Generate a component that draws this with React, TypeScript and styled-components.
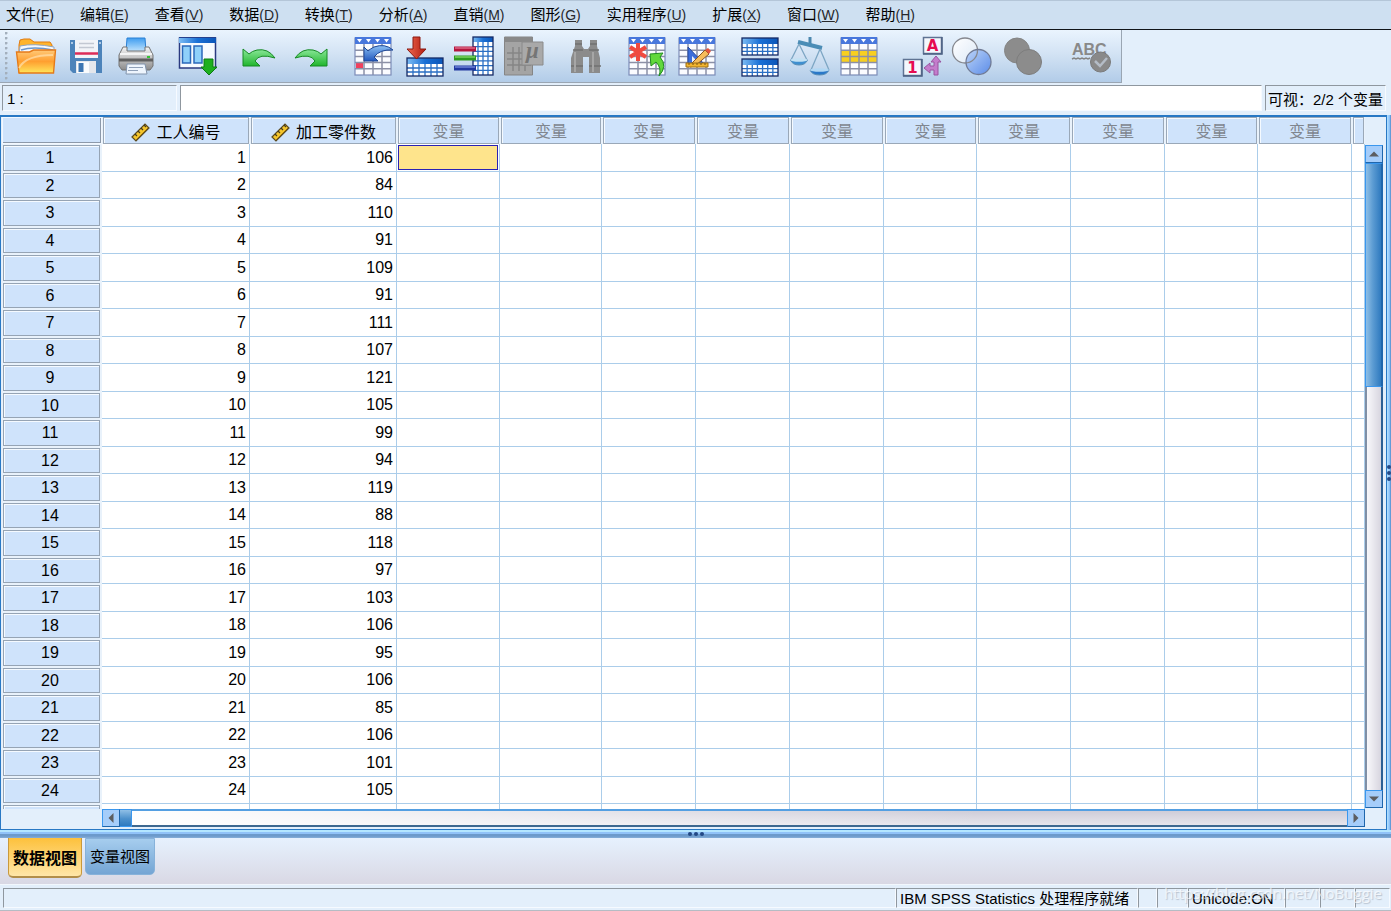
import React from 'react';
import styled, { createGlobalStyle, css } from 'styled-components';

const GlobalStyle = createGlobalStyle`
  * { box-sizing: border-box; }
  body {
    margin: 0;
    background: #e3effb;
    color: #000;
    font: 15px/20px "Liberation Sans", "Noto Sans CJK SC", sans-serif;
  }
  button, input { font: inherit; color: inherit; }
`;

const Shell = styled.div`
  display: flex;
  flex-direction: column;
  height: 100vh;
  overflow: hidden;
`;

/* ---------- menu bar ---------- */

const MenuBar = styled.nav`
  display: flex;
  gap: 26px;
  height: 30px;
  padding: 0 6px;
  background: #cee0f1;
  border-top: 1px solid #b4c6d8;
  border-bottom: 1px solid #101418;
`;

const MenuButton = styled.button`
  padding: 0;
  border: 0;
  background: none;
  white-space: nowrap;
`;

const Mnemonic = styled.span`
  font-size: 14px;
  color: #26282c;
`;

/* ---------- toolbar ---------- */

const Toolbar = styled.div`
  display: flex;
  align-self: flex-start;
  align-items: center;
  height: 53px;
  padding: 0 4px 0 5px;
  background: linear-gradient(#eaf4fe, #d3e3f4 45%, #b2cce8);
  border-right: 1px solid #9aa6b3;
  border-bottom: 1px solid #9aa6b3;
`;

const Grip = styled.div`
  width: 3px;
  height: 48px;
  margin-right: 3px;
  background: radial-gradient(circle at 1px 1px, #a3afbc 1px, transparent 2px) 0 0 / 3px 5px;
`;

const ToolGroup = styled.div<{ $space?: number }>`
  display: flex;
  margin-left: ${(p) => p.$space ?? 0}px;
`;

const ToolButton = styled.button`
  display: flex;
  align-items: center;
  justify-content: center;
  width: 50px;
  height: 50px;
  padding: 0;
  border: 0;
  background: none;
`;

/* ---------- cell entry ---------- */

const EntryRow = styled.div`
  display: flex;
  gap: 3px;
  height: 32px;
  padding: 2px 5px 4px 2px;
`;

const sunken = css`
  border: 1px solid #f6faff;
  border-top: 1px solid #8f979f;
  border-left: 1px solid #8f979f;
`;

const CellName = styled.input`
  ${sunken}
  width: 175px;
  padding: 2px 4px 0;
  background: #e3effb;
  border-radius: 0;
`;

const CellValue = styled.input`
  ${sunken}
  flex: 1;
  min-width: 0;
  padding: 2px 4px 0;
  background: #fff;
  border-radius: 0;
`;

const VisibleInfo = styled.div`
  ${sunken}
  width: 121px;
  padding: 4px 0 0 2px;
  white-space: nowrap;
`;

/* ---------- data grid ---------- */

const Workspace = styled.div`
  display: flex;
  flex: 1;
  min-height: 0;
`;

const Frame = styled.main`
  display: grid;
  grid-template-columns: minmax(0, 1fr) 19px;
  grid-template-rows: minmax(0, 1fr) 19px;
  flex: 1;
  min-width: 0;
  padding: 0 2px 1px 1px;
  border: 1px solid #2878c4;
  border-top-width: 2px;
`;

const GridClip = styled.div`
  overflow: hidden;
`;

const DataTable = styled.table`
  width: 100%;
  table-layout: fixed;
  border-collapse: separate;
  border-spacing: 0;
  font-size: 16px;
  line-height: 20px;
`;

const headFace = css`
  padding: 0;
  background: #cfe3fb;
  font-weight: normal;
  text-align: center;
  white-space: nowrap;
  overflow: hidden;
`;

const Corner = styled.th`
  ${headFace}
  height: 27px;
  box-shadow: inset 0 0 0 1px #f2f8ff, inset -1px -1px 0 1px #8c99aa;
`;

const ColumnHead = styled.th<{ $named?: boolean }>`
  ${headFace}
  height: 27px;
  padding-top: 2px;
  color: ${(p) => (p.$named ? '#000' : '#80868e')};
  box-shadow: inset 0 0 0 1px #9aa8b8, inset 2px 2px 0 0 #f5faff;
  border-right: 1px solid #e9f2fb;
  border-left: 1px solid #e9f2fb;
`;

const HeadLabel = styled.span`
  display: flex;
  align-items: center;
  justify-content: center;
  gap: 6px;
  padding-top: 2px;
`;

const BodyRow = styled.tr`
  height: 28px;
  &:nth-child(even) { height: 27px; }
`;

const RowHead = styled.th`
  ${headFace}
  padding-right: 3px;
  border-right: 1px solid #e9f2fb;
  box-shadow: inset 0 0 0 1px #e9f2fb, inset 0 0 0 2px #96a4b4, inset 3px 3px 0 0 #f5faff;
`;

const Cell = styled.td<{ $selected?: boolean }>`
  padding: 0 3px 0 0;
  background: #fff;
  border-right: 1px solid #abcdea;
  border-bottom: 1px solid #abcdea;
  text-align: right;
  ${(p) =>
    p.$selected &&
    css`
      background: #fee48c;
      box-shadow: inset 0 0 0 1px #fff, inset 0 0 0 2px #2a22b4;
    `}
`;

/* ---------- scroll bars ---------- */

const VScroll = styled.div`
  display: flex;
  flex-direction: column;
  padding-top: 28px;
  padding-bottom: 1px;
`;

const HScroll = styled.div`
  display: flex;
  height: 18px;
  margin-left: 100px;
`;

const ScrollButton = styled.button`
  display: flex;
  flex: none;
  align-items: center;
  justify-content: center;
  width: 18px;
  height: 18px;
  padding: 0;
  border: 1px solid #3a97ee;
  border-right-color: #1f66ac;
  border-bottom-color: #1f66ac;
  background: #a5cdfa;
`;

const VThumb = styled.div`
  flex: 223;
  width: 18px;
  border: 1px solid #3a97ee;
  border-right: 2px solid #1f66ac;
  background: linear-gradient(90deg, #8fbfe6, #5c9cd3 45%, #2f7abf);
`;

const VTrack = styled.div`
  flex: 406;
  width: 18px;
  border-left: 2px solid #7f8fa5;
  border-right: 2px solid #2c5f95;
  background: linear-gradient(90deg, #f8f8fb, #d7d5df);
`;

const HThumb = styled.div`
  width: 12px;
  border: solid #3a97ee;
  border-width: 1px 1px 1px 0;
  background: linear-gradient(#8fbfe6, #4c90cb 55%, #2f7abf);
`;

const HTrack = styled.div`
  flex: 1;
  border-top: 2px solid #549fe2;
  border-bottom: 2px solid #3d6890;
  background: linear-gradient(90deg, #fff, rgba(255, 255, 255, 0) 70%),
    linear-gradient(#cfcdd8, #e6e5ec);
`;

const SideSplitter = styled.div`
  display: flex;
  flex-direction: column;
  justify-content: center;
  width: 4px;
  background: linear-gradient(90deg, #b5e2ff, #8fc4fa 60%, #4f89c9);
`;

const BottomSplitter = styled.div`
  display: flex;
  justify-content: center;
  height: 8px;
  background: linear-gradient(#b4e6ff 0 2px, #90c2f8 2px 4px, #6c9acb 4px 6px, #86aed8);
`;

/* ---------- view tabs ---------- */

const TabStrip = styled.div`
  display: flex;
  align-items: flex-start;
  gap: 3px;
  height: 46px;
  padding-left: 8px;
  background: linear-gradient(#e6f1fe, #d9d8e4);
`;

const Tab = styled.button<{ $active?: boolean }>`
  padding: 0;
  white-space: nowrap;
  border-radius: 0 0 5px 5px;
  ${(p) =>
    p.$active
      ? css`
          width: 74px;
          height: 40px;
          padding-top: 4px;
          font-size: 16px;
          font-weight: bold;
          border: 1px solid #c9993c;
          border-top: 0;
          border-bottom: 2px solid #b28e49;
          background: linear-gradient(#fdc13c, #ffe6a8);
        `
      : css`
          width: 70px;
          height: 37px;
          border: 1px solid #87b2da;
          background: linear-gradient(#a6cdee, #74a5d4);
        `}
`;

/* ---------- status bar ---------- */

const StatusBar = styled.footer`
  position: relative;
  display: flex;
  height: 27px;
  padding: 3px 1px 2px 3px;
  border-top: 1px solid #f2f7fd;
  border-bottom: 1px solid #b5bcc4;
`;

const StatusCell = styled.div<{ $width?: number }>`
  ${sunken}
  flex: ${(p) => (p.$width ? `0 0 ${p.$width}px` : '1')};
  padding-left: 3px;
  white-space: nowrap;
`;

const Watermark = styled.span`
  position: absolute;
  right: 9px;
  top: -3px;
  font: 15px/22px "Open Sans", sans-serif;
  color: rgba(255, 255, 255, 0.7);
  text-shadow: 1px 1px 1px rgba(120, 130, 145, 0.4);
`;

/* ---------- icons ---------- */

const Icon = ({ children, name }: { children: React.ReactNode; name: string }) => (
  <svg width="42" height="42" viewBox="0 0 42 42" role="img" aria-label={name}>
    {children}
  </svg>
);

const lines = (x: number, y: number, w: number, h: number, cols: number, rows: number) => {
  let d = '';
  for (let i = 1; i < cols; i++) d += `M${x + (w * i) / cols} ${y}v${h}`;
  for (let j = 1; j < rows; j++) d += `M${x} ${y + (h * j) / rows}h${w}`;
  return d;
};

const Sheet = ({ x = 2, fill }: { x?: number; fill?: React.ReactNode }) => (
  <g>
    <rect x={x} y="3" width="36" height="37" fill="#fbfcff" />
    {fill}
    <path d={lines(x, 9, 36, 31, 4, 5)} stroke="#8c90a6" strokeWidth="1.5" />
    <rect x={x} y="3" width="36" height="37" fill="none" stroke="#7c8cb8" strokeWidth="1.2" />
    <rect x={x} y="2" width="36" height="7" fill="#4877dc" />
    {[0, 1, 2, 3].map((i) => (
      <path key={i} d={`M${x + 2 + i * 9} 4h5l-2.5 3.5z`} fill="#fff" />
    ))}
  </g>
);

const BlueTable = ({ x, y, w, h, cols, rows, head }: {
  x: number; y: number; w: number; h: number; cols: number; rows: number; head: number;
}) => (
  <g>
    <rect x={x} y={y} width={w} height={h} fill="#fff" />
    <path d={lines(x, y + head, w, h - head, cols, rows)} stroke="#2a6fc4" strokeWidth="1.3" />
    <rect x={x} y={y} width={w} height={head} fill="url(#headBlue)" />
    <rect x={x} y={y} width={w} height={h} fill="none" stroke="#152a66" strokeWidth="1.3" />
  </g>
);

const GradientDefs = styled.svg`
  display: block;
`;

const Gradients = () => (
  <GradientDefs width="0" height="0" aria-hidden="true">
    <defs>
      <linearGradient id="headBlue"><stop stopColor="#7dbdf4" /><stop offset=".5" stopColor="#1a70d6" /><stop offset="1" stopColor="#0b55b8" /></linearGradient>
      <linearGradient id="orange" x2="0" y2="1"><stop stopColor="#ffc978" /><stop offset=".5" stopColor="#ff9f30" /><stop offset="1" stopColor="#ffe65c" /></linearGradient>
      <linearGradient id="green" x2="0" y2="1"><stop stopColor="#8be89a" /><stop offset="1" stopColor="#20b52c" /></linearGradient>
      <linearGradient id="red"><stop stopColor="#f06a50" /><stop offset="1" stopColor="#b01a10" /></linearGradient>
      <linearGradient id="blue" x2="0" y2="1"><stop stopColor="#8cc0f4" /><stop offset="1" stopColor="#2358be" /></linearGradient>
      <linearGradient id="paper" x2="0" y2="1"><stop stopColor="#3f9df0" /><stop offset="1" stopColor="#c6e6fd" /></linearGradient>
      <linearGradient id="metal" x2="0" y2="1"><stop stopColor="#f4f4f4" /><stop offset="1" stopColor="#8c8c8c" /></linearGradient>
      <linearGradient id="lens" x2="1" y2="1"><stop stopColor="#bcd4f8" /><stop offset="1" stopColor="#5b8ce8" /></linearGradient>
      <linearGradient id="glass" x2="1" y2="1"><stop stopColor="#fff" /><stop offset="1" stopColor="#dce8f6" /></linearGradient>
    </defs>
  </GradientDefs>
);

const OpenIcon = () => (
  <Icon name="打开">
    <path d="M4 38V10l1-5 4-1h6l4 3h16l2 3v26z" fill="#ffb42c" stroke="#e07a10" />
    <path d="M5 11q14-3 34 1v8H4z" fill="#f7f9fc" stroke="#8fa6c4" />
    <path d="M6 15q12-4 32 0" fill="none" stroke="#6a97cc" strokeWidth="1.5" />
    <path d="M1.500 17h13l4-2h22l-2 23H4z" fill="url(#orange)" stroke="#e57a18" strokeWidth="1.4" />
    <path d="M4 33q7-13 34-13" fill="none" stroke="#ffdfae" strokeWidth="2" opacity=".7" />
  </Icon>
);
const SaveIcon = () => (
  <Icon name="保存">
    <path d="M5 5h32v33H8l-3-3z" fill="#4c83ba" />
    <path d="M10 5h23v18H10z" fill="#f2f4f8" />
    <path d="M14 8.500h15M14 12.500h15" stroke="#c3c8d2" strokeWidth="1.5" />
    <path d="M10 18.500h23" stroke="#dc2c58" strokeWidth="2.5" />
    <path d="M11 26h20v12H11z" fill="#e4e7ec" />
    <path d="M12 27h12v11H12z" fill="#fafbfc" />
    <path d="M13.500 28h5v9h-5z" fill="#3d76b2" />
    <path d="M7 7v2M35 7v2" stroke="#cfe2f4" strokeWidth="1.5" />
  </Icon>
);
const PrintIcon = () => (
  <Icon name="打印">
    <path d="M12 3h18l1 14H11z" fill="url(#paper)" stroke="#2a80d4" />
    <path d="M8 12h4v4h18v-4h4l4 8v11l-3 4H7l-3-4V20z" fill="url(#metal)" stroke="#737373" />
    <path d="M5 19h32" stroke="#fff" strokeWidth="1.500" />
    <path d="M4 25h34" stroke="#606060" strokeWidth="3" />
    <path d="M32 22h3" stroke="#36c436" strokeWidth="2" />
    <path d="M12 29h18l2 10H11z" fill="#eef5fd" stroke="#8294ac" />
    <path d="M14 32.500h14M13 35.500h10" stroke="#8fa0b8" />
  </Icon>
);
const RecallIcon = () => (
  <Icon name="重新调用对话框">
    <path d="M2.500 3h36v30h-36z" fill="#f6faff" stroke="#2a3a80" strokeWidth="1.5" />
    <path d="M2 2.500h37V8H2z" fill="url(#headBlue)" />
    <path d="M2 2.500h37" stroke="#25408c" />
    <path d="M5.500 11h8v17h-8zM17 11h8v17h-8z" fill="#8fd0fa" stroke="#2b68ba" strokeWidth="1.5" />
    <path d="M27 24h9v8h4l-8 8-8-8h3z" fill="#1eb01e" stroke="#0c7a14" />
  </Icon>
);
const undoPath = 'M4 14v17h17l-5-5q4-8 20-3-7-10-18-8-5 1-8 4z';
const UndoIcon = () => (
  <Icon name="撤销"><path d={undoPath} fill="url(#green)" stroke="#168a24" /></Icon>
);
const RedoIcon = () => (
  <Icon name="重做"><path d={undoPath} fill="url(#green)" stroke="#168a24" transform="matrix(-1 0 0 1 42 0)" /></Icon>
);
const GotoCaseIcon = () => (
  <Icon name="转到个案">
    <Sheet fill={<path d="M3 28h7v5H3z" fill="#f0405c" />} />
    <path d="M11 12v14h14l-4-4q6-8 19-7-8-7-19-3-4 2-6 4z" fill="url(#blue)" stroke="#1e4796" />
  </Icon>
);
const GotoVariableIcon = () => (
  <Icon name="转到变量">
    <BlueTable x={4} y={23} w={36} h={18} cols={6} rows={3} head={6} />
    <path d="M10 2h7v12h6l-9.500 10L4 14h6z" fill="url(#red)" stroke="#8c1810" />
  </Icon>
);
const VariablesIcon = () => (
  <Icon name="变量">
    <BlueTable x={20} y={2} w={20} h={38} cols={4} rows={7} head={5} />
    <path d="M1 14h22" stroke="#b4163e" strokeWidth="5" /><path d="M2 13h20" stroke="#f290a8" />
    <path d="M1 23h22" stroke="#2e9a20" strokeWidth="5" /><path d="M2 22h20" stroke="#a2f080" />
    <path d="M1 33h22" stroke="#2238a0" strokeWidth="5" /><path d="M2 32h20" stroke="#94a8f4" />
  </Icon>
);
const StatsIcon = () => (
  <Icon name="描述统计">
    <path d="M1.500 2h28v38h-28z" fill="#a4a4a4" stroke="#858585" />
    <path d="M1.500 2h28v5h-28z" fill="#898989" />
    <path d={lines(4, 12, 24, 24, 4, 4)} stroke="#858585" strokeWidth="1.5" />
    <path d="M19 7h21v23H19z" fill="#a9a9a9" stroke="#8a8a8a" />
    <text x="23" y="23" fontFamily="Liberation Serif" fontStyle="italic" fontWeight="bold" fontSize="23" fill="#757575">μ</text>
  </Icon>
);
const FindIcon = () => (
  <Icon name="查找">
    <path d="M10 5h7v6l2 3h4l2-3V5h7v6l3 12v15H24V22h-6v16H6V23l4-12z" fill="#8b8b8b" />
    <path d="M10 9h7M25 9h7M8 15h10M24 15h10M6 31h12M24 31h12" stroke="#727272" strokeWidth="1.5" />
    <path d="M10 17v20M28 17v20" stroke="#a6a6a6" strokeWidth="2" />
  </Icon>
);
const InsertCaseIcon = () => (
  <Icon name="插入个案">
    <Sheet />
    <path d="M11 8v18M3 12l16 10M19 12L3 22" stroke="#ef4a40" strokeWidth="4" />
    <path d="M23 19l13-1-3 4q8 9-1 19 3-8-3-14l-5 4z" fill="#62d83c" stroke="#218c20" />
  </Icon>
);
const InsertVariableIcon = () => (
  <Icon name="插入变量">
    <Sheet />
    <path d="M11 12v18h17z" fill="#3c6edb" stroke="#2448a0" /><path d="M15 21v6h6z" fill="#e9f1fc" />
    <path d="M15 28l13-13 4 4-14 12-5 1z" fill="#f6bc5a" stroke="#865423" />
    <path d="M28 15l4 4 2-3-3-3z" fill="#e6533c" />
    <path d="M9 28h22v4H9z" fill="#f2b530" stroke="#9c6c10" /><path d="M12 28v2m4-2v2m4-2v2m4-2v2m4-2v2" stroke="#7c5410" />
  </Icon>
);
const SplitIcon = () => (
  <Icon name="拆分文件">
    <BlueTable x={3} y={3} w={36} h={17} cols={7} rows={3} head={6} />
    <BlueTable x={3} y={24} w={36} h={17} cols={7} rows={3} head={6} />
  </Icon>
);
const WeightIcon = () => (
  <Icon name="个案加权">
    <path d="M21 2v9" stroke="#4c88ae" strokeWidth="3" />
    <path d="M9 7l24 6" stroke="#4b8db6" strokeWidth="4" />
    <path d="M10 9L2 25M10 9l8 16M31 14l-9 21M31 14l9 21" stroke="#7da6c4" strokeWidth="1.3" />
    <path d="M1.500 25h17q-2 5-8.500 5t-8.500-5z" fill="#3f8fd0" stroke="#5a8fb6" /><ellipse cx="10" cy="25" rx="8.500" ry="1.800" fill="#c4e2f4" />
    <path d="M21 35h19q-2 5-9.500 5T21 35z" fill="#2a78c8" stroke="#5a8fb6" /><ellipse cx="30.500" cy="35" rx="9.500" ry="1.800" fill="#b2d8f4" />
  </Icon>
);
const SelectIcon = () => (
  <Icon name="选择个案"><Sheet fill={<path d="M2 15h36v12H2z" fill="#f8cf20" />} /></Icon>
);
const LabelsIcon = () => (
  <Icon name="值标签">
    <path d="M22.500 2.500h18v16h-18zM2.500 24.500h18v16h-18z" fill="#f4f7fd" stroke="#5f7393" strokeWidth="1.5" />
    <path d="M22 19h19V2M2 41h19V24" fill="none" stroke="#4e6284" strokeWidth="1.5" />
    <text x="31.500" y="16" textAnchor="middle" fontFamily="DejaVu Sans" fontWeight="bold" fontSize="15" fill="#e60c50">A</text>
    <text x="11.500" y="38" textAnchor="middle" fontFamily="DejaVu Sans" fontWeight="bold" fontSize="15" fill="#e60c50">1</text>
    <path d="M35 21l5 6h-3v13h-4v-5h-4v3l-6-5 6-5v3h4v-4h-3z" fill="#c47ccc" stroke="#98559f" />
  </Icon>
);
const SetsIcon = () => (
  <Icon name="使用变量集">
    <circle cx="14" cy="15.500" r="12.500" fill="url(#glass)" />
    <circle cx="27.500" cy="27" r="12.500" fill="url(#lens)" />
    <circle cx="14" cy="15.500" r="12.500" fill="none" stroke="#86888f" strokeWidth="1.3" />
    <circle cx="27.500" cy="27" r="12.500" fill="none" stroke="#707a94" strokeWidth="1.3" />
  </Icon>
);
const ShowAllIcon = () => (
  <Icon name="显示所有变量">
    <circle cx="16" cy="15.500" r="12.500" fill="#8c8c8c" stroke="#858585" />
    <circle cx="28" cy="27" r="12.500" fill="#8c8c8c" stroke="#7d7d7d" />
  </Icon>
);
const SpellIcon = () => (
  <Icon name="拼写检查">
    <text x="1" y="20" fontFamily="Liberation Sans" fontWeight="bold" fontSize="16" fill="#898989">ABC</text>
    <path d="M1 24l2-1 2 1 2-1 2 1 2-1 2 1 2-1 2 1 2-1" fill="none" stroke="#848484" strokeWidth="1.500" />
    <circle cx="29.500" cy="27" r="10" fill="#898989" stroke="#7a7a7a" />
    <path d="M24 26l5 5 7-8" fill="none" stroke="#b4bcc6" strokeWidth="2.500" />
  </Icon>
);
const RulerIcon = () => (
  <svg width="19" height="19" viewBox="0 0 19 19" aria-hidden="true">
    <path d="M1 14L14 1l4 4L5 18z" fill="#f4c52c" stroke="#5a4a20" strokeWidth="1.2" />
    <path d="M4 11l2 2M7 8l2 2M10 5l2 2M13 2l2 2" stroke="#453a1e" strokeWidth="1.2" />
    <path d="M5 17L17 5" fill="none" stroke="#8f6a10" />
  </svg>
);
const Arrow = ({ turn }: { turn: number }) => (
  <svg width="12" height="12" viewBox="0 0 12 12" aria-hidden="true">
    <path d="M1 8.500L6 3.500l5 5z" fill="#5c5d60" transform={`rotate(${turn} 6 6)`} />
  </svg>
);
const Dots = ({ vertical }: { vertical?: boolean }) => (
  <svg width={vertical ? 4 : 18} height={vertical ? 18 : 8} aria-hidden="true">
    {[3, 9, 15].map((n) => (
      <circle key={n} cx={vertical ? 2 : n} cy={vertical ? n : 4} r="2" fill="#234886" />
    ))}
  </svg>
);

/* ---------- content ---------- */

const menus = [
  ['文件', 'F'], ['编辑', 'E'], ['查看', 'V'], ['数据', 'D'], ['转换', 'T'], ['分析', 'A'],
  ['直销', 'M'], ['图形', 'G'], ['实用程序', 'U'], ['扩展', 'X'], ['窗口', 'W'], ['帮助', 'H'],
];

const toolGroups: { space?: number; icons: React.FC[] }[] = [
  { icons: [OpenIcon, SaveIcon, PrintIcon] },
  { space: 12, icons: [RecallIcon] },
  { space: 12, icons: [UndoIcon, RedoIcon] },
  { space: 14, icons: [GotoCaseIcon, GotoVariableIcon, VariablesIcon, StatsIcon] },
  { space: 12, icons: [FindIcon] },
  { space: 12, icons: [InsertCaseIcon, InsertVariableIcon] },
  { space: 12, icons: [SplitIcon, WeightIcon, SelectIcon] },
  { space: 12, icons: [LabelsIcon, SetsIcon, ShowAllIcon] },
  { space: 20, icons: [SpellIcon] },
];

const columnWidths = [100, 148, 147, 103, 102, 94, 94, 94, 93, 94, 94, 93, 94];
const emptyColumns = 10;
const output = [
  106, 84, 110, 91, 109, 91, 111, 107, 121, 105, 99, 94,
  119, 88, 118, 97, 103, 106, 95, 106, 85, 106, 101, 105,
];
const statusWidths = [35, 35, 35];

export default function App() {
  return (
    <Shell>
      <GlobalStyle />
      <Gradients />
      <MenuBar>
        {menus.map(([label, key]) => (
          <MenuButton key={key}>{label}<Mnemonic>(<u>{key}</u>)</Mnemonic></MenuButton>
        ))}
      </MenuBar>
      <Toolbar role="toolbar">
        <Grip />
        {toolGroups.map((group, i) => (
          <ToolGroup key={i} $space={group.space}>
            {group.icons.map((Glyph, j) => (
              <ToolButton key={j}><Glyph /></ToolButton>
            ))}
          </ToolGroup>
        ))}
      </Toolbar>
      <EntryRow>
        <CellName aria-label="单元格" readOnly value="1 :" />
        <CellValue aria-label="值" />
        <VisibleInfo>可视：2/2 个变量</VisibleInfo>
      </EntryRow>
      <Workspace>
        <Frame>
          <GridClip>
            <DataTable>
              <colgroup>
                {columnWidths.map((width, i) => <col key={i} width={width} />)}
                <col />
              </colgroup>
              <thead>
                <tr>
                  <Corner />
                  {['工人编号', '加工零件数'].map((name) => (
                    <ColumnHead key={name} $named scope="col">
                      <HeadLabel><RulerIcon />{name}</HeadLabel>
                    </ColumnHead>
                  ))}
                  {Array.from({ length: emptyColumns }, (_, i) => (
                    <ColumnHead key={i} scope="col">变量</ColumnHead>
                  ))}
                  <ColumnHead />
                </tr>
              </thead>
              <tbody>
                {output.map((value, row) => (
                  <BodyRow key={row}>
                    <RowHead scope="row">{row + 1}</RowHead>
                    <Cell>{row + 1}</Cell>
                    <Cell>{value}</Cell>
                    {Array.from({ length: emptyColumns + 1 }, (_, i) => (
                      <Cell key={i} $selected={row === 0 && i === 0} />
                    ))}
                  </BodyRow>
                ))}
                <BodyRow>
                  <RowHead />
                  {Array.from({ length: emptyColumns + 3 }, (_, i) => <Cell key={i} />)}
                </BodyRow>
              </tbody>
            </DataTable>
          </GridClip>
          <VScroll>
            <ScrollButton aria-label="向上"><Arrow turn={0} /></ScrollButton>
            <VThumb />
            <VTrack />
            <ScrollButton aria-label="向下"><Arrow turn={180} /></ScrollButton>
          </VScroll>
          <HScroll>
            <ScrollButton aria-label="向左"><Arrow turn={270} /></ScrollButton>
            <HThumb />
            <HTrack />
            <ScrollButton aria-label="向右"><Arrow turn={90} /></ScrollButton>
          </HScroll>
        </Frame>
        <SideSplitter><Dots vertical /></SideSplitter>
      </Workspace>
      <BottomSplitter><Dots /></BottomSplitter>
      <TabStrip>
        <Tab $active>数据视图</Tab>
        <Tab>变量视图</Tab>
      </TabStrip>
      <StatusBar>
        <StatusCell />
        <StatusCell $width={242}>IBM SPSS Statistics 处理程序就绪</StatusCell>
        <StatusCell $width={19} />
        <StatusCell $width={31} />
        <StatusCell $width={97}>Unicode:ON</StatusCell>
        {statusWidths.map((width, i) => <StatusCell key={i} $width={width} />)}
        <Watermark>https://blog.csdn.net/NoBuggie</Watermark>
      </StatusBar>
    </Shell>
  );
}
